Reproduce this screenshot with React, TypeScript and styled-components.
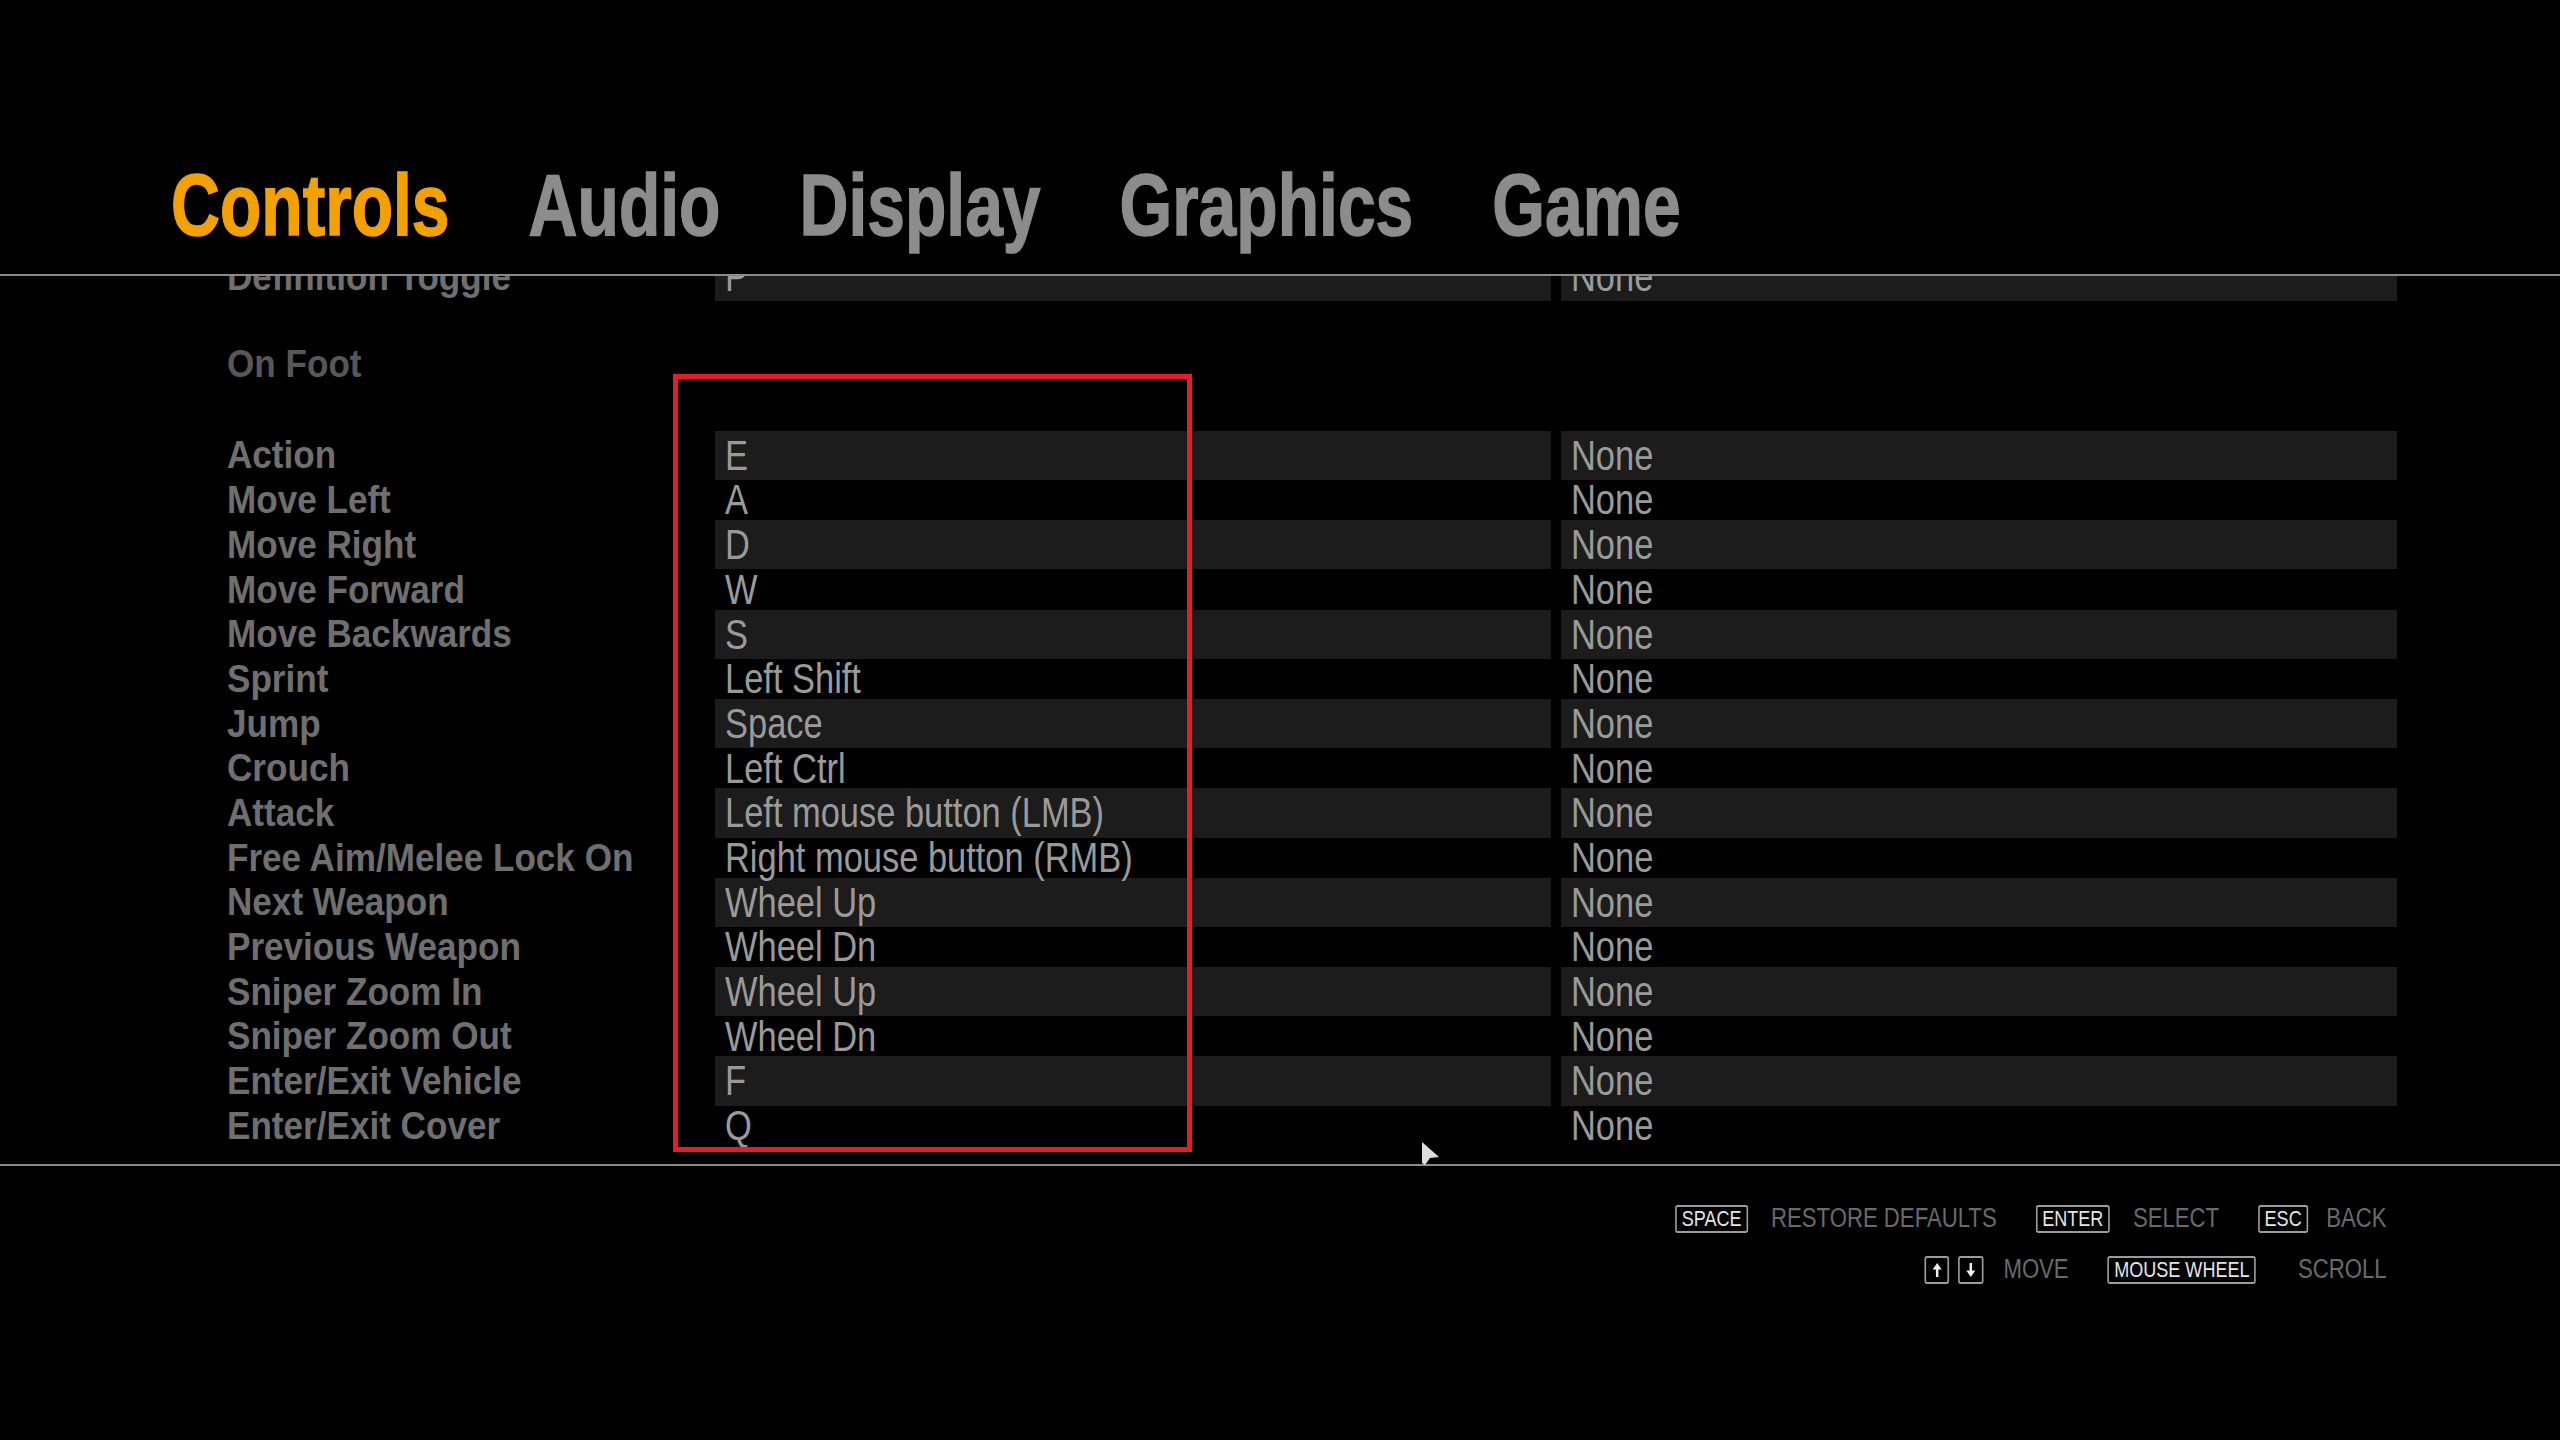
import React from "react";
import styled, { createGlobalStyle } from "styled-components";

const GlobalStyle = createGlobalStyle`
  html, body {
    margin: 0;
    padding: 0;
    background: #000;
  }
  body {
    font-family: "Liberation Sans", Arial, sans-serif;
  }
`;

const ROW_HEIGHT = 44.7;
// the game's UI face is a condensed grotesque; squeeze Liberation Sans to its widths
const TAB_SQUEEZE = 0.77;
const LABEL_SQUEEZE = 0.9;
const VALUE_SQUEEZE = 0.82;
const HINT_SQUEEZE = 0.82;

const Screen = styled.div`
  position: relative;
  width: 2560px;
  height: 1440px;
  background: #000;
  overflow: hidden;
  display: flex;
  flex-direction: column;
`;

const TabBar = styled.nav`
  height: 274px;
  box-sizing: border-box;
  display: flex;
  align-items: flex-end;
  padding: 0 0 25px 171px;
`;

const TabStrip = styled.div`
  display: flex;
  gap: ${79 / TAB_SQUEEZE}px;
  transform: scaleX(${TAB_SQUEEZE});
  transform-origin: left bottom;
`;

const Tab = styled.div<{ $active?: boolean }>`
  font-weight: 700;
  font-size: 88px;
  line-height: 1;
  color: ${(p) => (p.$active ? "#f2a100" : "#8c8c8c")};
  -webkit-text-stroke: 1.5px ${(p) => (p.$active ? "#f2a100" : "#8c8c8c")};
  white-space: nowrap;
`;

const Divider = styled.div`
  height: 2px;
  background: #8a8a8a;
  flex: none;
`;

const Viewport = styled.div`
  height: 888px;
  overflow: hidden;
  flex: none;
`;

// scrolled list: the first visible row sits partly under the top divider
const List = styled.div<{ $offset: number }>`
  margin-top: ${(p) => -p.$offset}px;
  display: flex;
  flex-direction: column;
`;

const Row = styled.div<{ $striped?: boolean }>`
  display: grid;
  grid-template-columns: 478px 836px 836px;
  column-gap: 10px;
  padding-left: 227px;
  height: ${ROW_HEIGHT}px;
  align-items: stretch;

  & > .binding {
    background: ${(p) => (p.$striped ? "#1c1c1c" : "transparent")};
  }
`;

const Label = styled.div`
  display: flex;
  align-items: center;
  padding-top: 1px;
`;

const LabelText = styled.span<{ $heading?: boolean }>`
  display: inline-block;
  font-weight: 700;
  font-size: 39px;
  line-height: 1.15;
  color: ${(p) => (p.$heading ? "#575757" : "#6f6f6f")};
  white-space: nowrap;
  transform: scaleX(${LABEL_SQUEEZE});
  transform-origin: left center;
`;

const Binding = styled.div`
  display: flex;
  align-items: center;
  padding: 1px 0 0 10px;
`;

const BindingText = styled.span`
  display: inline-block;
  font-size: 42px;
  line-height: 1.15;
  color: #9a9a9a;
  white-space: nowrap;
  transform: scaleX(${VALUE_SQUEEZE});
  transform-origin: left center;
`;

const Footer = styled.footer`
  display: flex;
  flex-direction: column;
  align-items: flex-end;
  gap: 20px;
  padding: 37px 173px 0 0;
`;

const HintRow = styled.div`
  display: flex;
  align-items: center;
  gap: ${39 / HINT_SQUEEZE}px;
  transform: scaleX(${HINT_SQUEEZE});
  transform-origin: right center;
`;

const Hint = styled.div<{ $labelGap?: number }>`
  display: flex;
  align-items: center;
  gap: ${(p) => (p.$labelGap ?? 23) / HINT_SQUEEZE}px;
`;

const KeyGroup = styled.div`
  display: flex;
  gap: ${9 / HINT_SQUEEZE}px;
`;

const Key = styled.div<{ $narrow?: boolean }>`
  box-sizing: border-box;
  height: 28px;
  min-width: ${(p) => (p.$narrow ? 25 / HINT_SQUEEZE : 0)}px;
  padding: ${(p) => (p.$narrow ? "0" : "0 6px")};
  border: 2px solid #9c9c9c;
  border-radius: 3px;
  display: flex;
  align-items: center;
  justify-content: center;
  font-size: 22px;
  line-height: 1;
  color: #e6e6e6;
  white-space: nowrap;
`;

const HintText = styled.span`
  font-size: 27px;
  color: #6a6a6a;
  line-height: 1.15;
  white-space: nowrap;
`;

const Highlight = styled.div`
  position: absolute;
  left: 673px;
  top: 374px;
  width: 519px;
  height: 778px;
  box-sizing: border-box;
  border: 5px solid #e81b2b;
  pointer-events: none;
`;

const Pointer = styled.svg`
  position: absolute;
  left: 1422px;
  top: 1142px;
`;

type Entry = { label: string; primary: string; secondary: string };

const vehicleTail: Entry[] = [
  { label: "Definition Toggle", primary: "P", secondary: "None" },
];

const onFoot: Entry[] = [
  { label: "Action", primary: "E", secondary: "None" },
  { label: "Move Left", primary: "A", secondary: "None" },
  { label: "Move Right", primary: "D", secondary: "None" },
  { label: "Move Forward", primary: "W", secondary: "None" },
  { label: "Move Backwards", primary: "S", secondary: "None" },
  { label: "Sprint", primary: "Left Shift", secondary: "None" },
  { label: "Jump", primary: "Space", secondary: "None" },
  { label: "Crouch", primary: "Left Ctrl", secondary: "None" },
  { label: "Attack", primary: "Left mouse button (LMB)", secondary: "None" },
  { label: "Free Aim/Melee Lock On", primary: "Right mouse button (RMB)", secondary: "None" },
  { label: "Next Weapon", primary: "Wheel Up", secondary: "None" },
  { label: "Previous Weapon", primary: "Wheel Dn", secondary: "None" },
  { label: "Sniper Zoom In", primary: "Wheel Up", secondary: "None" },
  { label: "Sniper Zoom Out", primary: "Wheel Dn", secondary: "None" },
  { label: "Enter/Exit Vehicle", primary: "F", secondary: "None" },
  { label: "Enter/Exit Cover", primary: "Q", secondary: "None" },
];

const tabs = ["Controls", "Audio", "Display", "Graphics", "Game"];

const BindingRow = ({ item, striped }: { item: Entry; striped: boolean }) => (
  <Row $striped={striped}>
    <Label>
      <LabelText>{item.label}</LabelText>
    </Label>
    <Binding className="binding">
      <BindingText>{item.primary}</BindingText>
    </Binding>
    <Binding className="binding">
      <BindingText>{item.secondary}</BindingText>
    </Binding>
  </Row>
);

const Arrow = ({ down }: { down?: boolean }) => (
  <svg width="13" height="16" viewBox="0 0 13 16">
    <g transform={down ? "rotate(180 6.5 8)" : undefined} fill="#f0f0f0">
      <polygon points="6.5,1 12,7.5 8,7.5 8,15 5,15 5,7.5 1,7.5" />
    </g>
  </svg>
);

export default function App() {
  return (
    <>
      <GlobalStyle />
      <Screen>
        <TabBar>
          <TabStrip>
            {tabs.map((t, i) => (
              <Tab key={t} $active={i === 0}>
                {t}
              </Tab>
            ))}
          </TabStrip>
        </TabBar>
        <Divider />
        <Viewport>
          <List $offset={24}>
            {vehicleTail.map((b) => (
              <BindingRow key={b.label} item={b} striped />
            ))}
            <Row />
            <Row>
              <Label>
                <LabelText $heading>On Foot</LabelText>
              </Label>
            </Row>
            <Row />
            {onFoot.map((b, i) => (
              <BindingRow key={b.label} item={b} striped={i % 2 === 0} />
            ))}
          </List>
        </Viewport>
        <Divider />
        <Footer>
          <HintRow>
            <Hint>
              <Key>SPACE</Key>
              <HintText>RESTORE DEFAULTS</HintText>
            </Hint>
            <Hint>
              <Key>ENTER</Key>
              <HintText>SELECT</HintText>
            </Hint>
            <Hint $labelGap={18}>
              <Key>ESC</Key>
              <HintText>BACK</HintText>
            </Hint>
          </HintRow>
          <HintRow>
            <Hint $labelGap={20}>
              <KeyGroup>
                <Key $narrow>
                  <Arrow />
                </Key>
                <Key $narrow>
                  <Arrow down />
                </Key>
              </KeyGroup>
              <HintText>MOVE</HintText>
            </Hint>
            <Hint $labelGap={42}>
              <Key>MOUSE WHEEL</Key>
              <HintText>SCROLL</HintText>
            </Hint>
          </HintRow>
        </Footer>
        <Highlight />
        <Pointer width="20" height="26" viewBox="0 0 20 26">
          <polygon points="0,0 17,15 8,16 3,23 0,21" fill="#dcdcdc" />
        </Pointer>
      </Screen>
    </>
  );
}
